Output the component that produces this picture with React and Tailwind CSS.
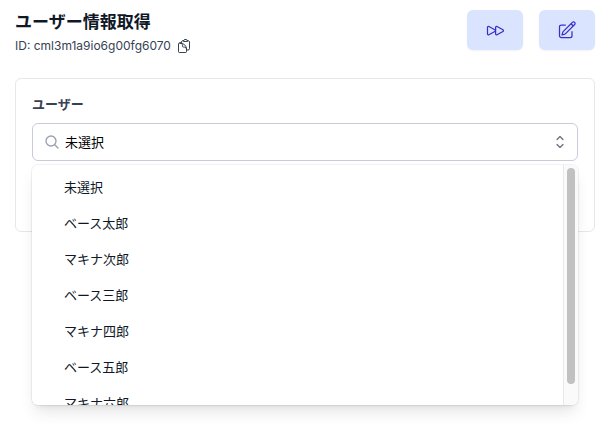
import { useState } from "react";
import {
    HiMiniChevronUpDown,
    HiOutlineClipboardDocument,
    HiOutlineForward,
    HiOutlineMagnifyingGlass,
    HiOutlinePencilSquare,
} from "react-icons/hi2";

const users = [
    "未選択",
    "ベース太郎",
    "マキナ次郎",
    "ベース三郎",
    "マキナ四郎",
    "ベース五郎",
    "マキナ六郎",
];

function ActionButton({ label, children }) {
    return (
        <button
            type="button"
            aria-label={label}
            className="flex h-10 w-14 items-center justify-center rounded-md bg-[#dbe4ff] text-[#3730c8] shadow-xs hover:bg-indigo-200"
        >
            {children}
        </button>
    );
}

function UserSelect() {
    const [open, setOpen] = useState(true);
    const [query, setQuery] = useState(users[0]);

    const select = (user) => {
        setQuery(user);
        setOpen(false);
    };

    return (
        <div className="relative">
            <div className="flex items-center gap-[5px] rounded-md border border-[#c9cbd6] bg-white pr-2 pl-[11px]">
                <HiOutlineMagnifyingGlass className="size-4 shrink-0 stroke-2 text-gray-400" />
                <input
                    id="user"
                    type="text"
                    role="combobox"
                    aria-expanded={open}
                    aria-controls="user-options"
                    value={query}
                    onChange={(e) => setQuery(e.target.value)}
                    className="min-w-0 flex-1 py-2 text-[13px] leading-5 text-black outline-none"
                />
                <button type="button" aria-label="選択肢を開く" onClick={() => setOpen(!open)}>
                    <HiMiniChevronUpDown className="size-[18px] text-gray-500" />
                </button>
            </div>

            {open && (
                <div className="absolute inset-x-0 top-full z-10 mt-1 flex h-60 overflow-hidden rounded-md bg-white shadow-lg ring-1 ring-black/5">
                    <ul id="user-options" role="listbox" className="flex-1 overflow-y-auto py-1 [scrollbar-width:none]">
                        {users.map((user) => (
                            <li
                                key={user}
                                role="option"
                                aria-selected={user === query}
                                onClick={() => select(user)}
                                className="cursor-default py-2 pr-4 pl-8 text-[13px] leading-5 text-gray-900 hover:bg-indigo-50"
                            >
                                {user}
                            </li>
                        ))}
                    </ul>
                    <div className="w-[15px] border-l border-[#e8e8e8] bg-[#fafafa] px-[3px] pt-[3px]">
                        <div className="h-[216px] rounded-full bg-[#c1c1c1]" />
                    </div>
                </div>
            )}
        </div>
    );
}

export default function App() {
    return (
        <main className="min-h-screen bg-white pt-[10px] pr-[13px] pl-[15px] font-['Inter','Noto_Sans_CJK_JP',sans-serif]">
            <header className="flex items-start justify-between">
                <div>
                    <h1 className="text-[17px] leading-6 font-bold text-gray-900">ユーザー情報取得</h1>
                    <div className="flex items-center gap-[5px] text-[12px] leading-6 text-gray-700">
                        <span>ID: cml3m1a9io6g00fg6070</span>
                        <button type="button" aria-label="IDをコピー">
                            <HiOutlineClipboardDocument className="size-4" />
                        </button>
                    </div>
                </div>
                <div className="flex gap-4">
                    <ActionButton label="実行">
                        <HiOutlineForward className="size-5" />
                    </ActionButton>
                    <ActionButton label="編集">
                        <HiOutlinePencilSquare className="size-5" />
                    </ActionButton>
                </div>
            </header>

            <section className="mt-5 rounded-md border border-gray-200 px-4 pt-[15px] pb-[70px]">
                <label htmlFor="user" className="mb-[9px] block text-[13px] leading-5 font-bold text-gray-700">
                    ユーザー
                </label>
                <UserSelect />
            </section>
        </main>
    );
}
